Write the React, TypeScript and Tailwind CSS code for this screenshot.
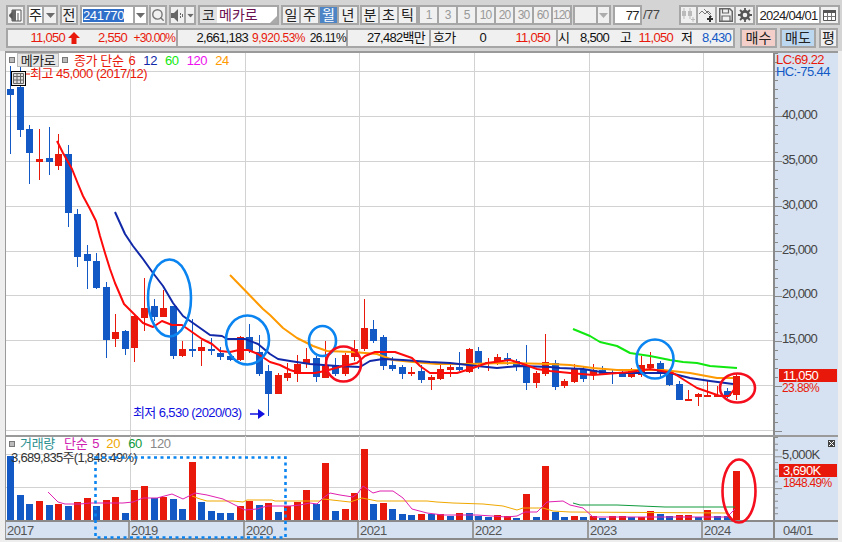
import { Search } from "lucide-react";

type Candle = [number, number, number, number, "r" | "b"];

const RED = "#e8190a";
const BLUE = "#1259c6";
const xAt = (i: number) => Math.round(10.3 + i * 9.55);

// high, body top, body bottom, low (all in page pixels)
const candles: Candle[] = [
  [65, 88, 94, 153, "b"], [66, 86, 129, 136, "b"], [124, 128, 152, 183, "b"], [128, 158, 161, 179, "r"],
  [126, 157, 161, 174, "b"], [133, 153, 165, 169, "r"], [144, 153, 212, 226, "b"], [208, 213, 256, 266, "b"],
  [244, 253, 260, 288, "b"], [252, 260, 287, 288, "b"], [281, 286, 339, 357, "b"], [313, 331, 338, 346, "r"],
  [329, 330, 348, 354, "b"], [314, 315, 347, 361, "r"], [277, 307, 317, 330, "r"], [298, 305, 316, 320, "b"],
  [289, 307, 316, 316, "r"], [305, 305, 355, 358, "b"], [340, 348, 355, 356, "r"], [318, 348, 349, 356, "b"],
  [339, 346, 350, 365, "r"], [337, 348, 350, 354, "b"], [346, 352, 356, 359, "b"], [350, 355, 359, 360, "b"],
  [335, 336, 359, 360, "r"], [323, 336, 350, 352, "b"], [334, 351, 373, 375, "b"], [364, 370, 393, 415, "b"],
  [372, 374, 393, 393, "r"], [362, 372, 377, 380, "r"], [354, 363, 373, 381, "r"], [347, 358, 362, 367, "r"],
  [355, 357, 376, 381, "b"], [340, 365, 377, 377, "r"], [357, 364, 373, 375, "b"], [352, 354, 373, 375, "r"],
  [339, 348, 356, 360, "r"], [298, 327, 348, 350, "r"], [319, 328, 340, 342, "b"], [334, 336, 365, 369, "b"],
  [356, 364, 368, 370, "b"], [364, 366, 373, 378, "b"], [366, 371, 373, 375, "r"], [364, 370, 379, 382, "b"],
  [374, 376, 379, 389, "r"], [362, 368, 378, 379, "r"], [364, 366, 369, 376, "r"], [351, 366, 369, 370, "b"],
  [347, 348, 371, 372, "r"], [346, 350, 363, 368, "b"], [357, 361, 363, 370, "r"], [353, 356, 362, 364, "r"],
  [352, 357, 360, 364, "b"], [358, 360, 366, 370, "b"], [344, 365, 382, 389, "b"], [370, 372, 382, 387, "r"],
  [333, 361, 373, 375, "r"], [359, 362, 386, 389, "b"], [378, 380, 385, 387, "r"], [363, 368, 381, 382, "r"],
  [365, 368, 378, 381, "b"], [363, 369, 374, 379, "r"], [365, 369, 373, 374, "b"], [368, 371, 372, 383, "b"],
  [369, 373, 376, 376, "b"], [367, 369, 376, 377, "r"], [355, 364, 374, 376, "r"], [351, 363, 367, 370, "r"],
  [360, 362, 373, 376, "b"], [371, 373, 384, 385, "b"], [380, 383, 399, 399, "b"], [389, 398, 400, 400, "r"],
  [392, 393, 396, 405, "r"], [379, 394, 395, 396, "r"], [385, 394, 395, 396, "r"], [387, 390, 395, 397, "b"],
  [372, 375, 394, 399, "r"],
];

const volumes: [number, "r" | "b"][] = [
  [456, "b"], [495, "b"], [504, "b"], [501, "r"], [505, "b"], [504, "r"], [506, "b"], [502, "r"], [498, "r"], [506, "b"],
  [500, "r"], [497, "r"], [513, "b"], [490, "r"], [486, "r"], [498, "b"], [497, "r"], [499, "b"], [509, "b"], [462, "r"],
  [502, "b"], [511, "b"], [513, "b"], [513, "b"], [506, "r"], [501, "r"], [505, "b"], [503, "r"], [512, "b"], [506, "r"],
  [502, "r"], [490, "r"], [504, "b"], [463, "r"], [511, "b"], [509, "r"], [493, "r"], [449, "r"], [504, "b"], [503, "r"],
  [509, "b"], [514, "b"], [515, "b"], [514, "r"], [514, "b"], [514, "r"], [516, "b"], [513, "r"], [513, "b"], [516, "b"],
  [517, "b"], [515, "r"], [516, "r"], [518, "b"], [494, "r"], [517, "b"], [466, "r"], [512, "b"], [517, "b"], [516, "r"],
  [517, "b"], [516, "r"], [518, "b"], [516, "r"], [516, "r"], [517, "b"], [517, "r"], [511, "r"], [514, "b"], [516, "b"],
  [515, "r"], [515, "r"], [517, "b"], [510, "r"], [516, "b"], [516, "b"], [471, "r"],
];

const maRed =
  "57,140 63,152 72,168 78,183 83,195 90,208 96,220 100,235 105,252 110,268 115,282 124,303 133,312 143,322 153,326 162,320 172,324 182,324 192,331 202,338 212,343 220,350 230,351 239,349 248,349 258,353 270,361 280,364 290,369 300,372 315,372 325,370 343,365 357,362 365,355 375,351 395,351 412,357 420,365 430,372 457,372 470,368 487,362 510,359 523,363 537,368 550,370 570,372 593,374 630,371 650,368 673,372 697,387 720,395 729,395 736,386";
const maNavy =
  "115,211 120,222 125,233 133,245 143,258 153,272 163,285 173,302 183,315 193,322 210,334 222,335 227,338 245,338 258,343 270,353 278,358 290,360 310,363 337,365 360,366 370,360 383,358 403,359 430,361 450,362 477,365 497,367 520,365 550,366 560,367 583,368 607,372 630,372 670,372 690,377 710,380 733,383";
const maOrange =
  "230,274 263,308 270,314 283,327 297,337 313,345 327,350 353,351 377,353 393,359 413,361 437,363 470,363 503,362 550,363 570,364 593,367 617,369 663,369 690,372 717,377 733,377";
const maGreen =
  "573,328 590,335 600,341 617,345 630,352 650,355 670,359 683,361 697,362 710,365 737,367";
const volMagenta =
  "48,492 58,502 65,504 80,504 90,503 110,503 123,503 133,502 143,498 157,498 172,494 183,499 195,493 207,495 223,499 237,506 245,510 257,509 267,506 290,506 300,505 310,503 317,504 323,498 330,493 340,495 353,497 358,493 363,486 373,493 380,491 393,491 403,498 412,509 427,513 443,515 477,515 507,517 517,516 525,512 537,512 547,502 563,501 570,505 583,508 593,517 607,517 727,517 735,509";
const volYellow =
  "192,496 200,499 207,501 233,501 243,502 247,500 272,500 275,501 320,501 323,499 350,502 362,498 377,501 427,501 437,502 453,503 483,504 503,506 517,510 523,508 543,508 553,511 570,512 727,513";
const volGreen = "573,503 580,505 617,505 665,507 713,507 735,507";

const gridX = [130, 245, 359, 474, 589, 703];
const priceGrid = [70, 115, 160, 205, 250, 294, 339, 384, 429];
const priceLabels = [
  ["40,000", 115], ["35,000", 160], ["30,000", 205], ["25,000", 250], ["20,000", 294], ["15,000", 339],
] as const;
const years = [
  ["2017", 124], ["2019", 115], ["2020", 114], ["2021", 115], ["2022", 115], ["2023", 114], ["2024", 70],
] as const;

function Arrow() {
  return (
    <svg width="9" height="5" viewBox="0 0 9 5">
      <path d="M0 0h9L4.5 5z" fill="#6b6b6b" />
    </svg>
  );
}

function Btn({ className = "", bg = "bg-[#f0f0f0]", children }: { className?: string; bg?: string; children?: React.ReactNode }) {
  return (
    <div className={`flex h-[20px] shrink-0 items-center justify-center border-2 border-[#a6a6a6] leading-none ${bg} ${className}`}>
      {children}
    </div>
  );
}

function Square() {
  return <span className="block h-[6px] w-[6px] border border-[#777] bg-[#bbb]" />;
}

function MainChart() {
  return (
    <svg className="block h-[382px] w-[767px]" viewBox="6 52 767 382">
      <g stroke="#d2d2d2" strokeWidth="1" shapeRendering="crispEdges">
        {gridX.map((x) => <line key={x} x1={x} x2={x} y1={52} y2={434} />)}
        {priceGrid.map((y) => <line key={y} x1={6} x2={773} y1={y} y2={y} />)}
      </g>
      <g shapeRendering="crispEdges">
        {candles.map(([hi, top, bot, lo, c], i) => (
          <g key={i} fill={c === "r" ? RED : BLUE}>
            <rect x={xAt(i)} y={hi} width={1} height={lo - hi} />
            <rect x={xAt(i) - 3} y={top} width={7} height={Math.max(bot - top, 2)} />
          </g>
        ))}
      </g>
      <g fill="none" strokeWidth="2" strokeLinejoin="round">
        <polyline points={maOrange} stroke="#ff9a00" />
        <polyline points={maNavy} stroke="#1129a8" />
        <polyline points={maRed} stroke="#ff0a0a" />
        <polyline points={maGreen} stroke="#10e810" />
      </g>
      <path d="M20 73h10" stroke={RED} />
      <path d="M250 413h11" stroke="#1010e0" strokeWidth="1.5" />
      <path d="M258 408l7 5-7 5z" fill="#1010e0" />
    </svg>
  );
}

function VolumeChart() {
  return (
    <svg className="block h-[85px] w-[767px]" viewBox="6 436 767 85">
      <g stroke="#d2d2d2" strokeWidth="1" shapeRendering="crispEdges">
        {gridX.map((x) => <line key={x} x1={x} x2={x} y1={436} y2={521} />)}
        {[454, 487].map((y) => <line key={y} x1={6} x2={773} y1={y} y2={y} />)}
      </g>
      <g shapeRendering="crispEdges">
        {volumes.map(([top, c], i) => (
          <rect key={i} x={xAt(i) - 3} y={top} width={7} height={520 - top} fill={c === "r" ? RED : BLUE} />
        ))}
      </g>
      <g fill="none" strokeWidth="1">
        <polyline points={volGreen} stroke="#0f9a3c" />
        <polyline points={volYellow} stroke="#f0a800" />
        <polyline points={volMagenta} stroke="#e020b0" />
      </g>
    </svg>
  );
}

function AxisTicks({ from, to, step, major }: { from: number; to: number; step: number; major: number }) {
  const ticks: number[] = [];
  for (let y = from; y < to; y += step) ticks.push(Math.round(y));
  return (
    <svg className="absolute left-0 top-0 h-full w-[10px]" viewBox={`0 ${from} 10 ${to - from}`} preserveAspectRatio="none">
      {ticks.map((y, i) => (
        <rect key={i} x={0} y={y} height={1} width={i % 5 === major ? 7 : 3} fill="#8a8a8a" />
      ))}
    </svg>
  );
}

export default function App() {
  return (
    <div className="relative h-[542px] w-[842px] overflow-hidden bg-[#d4d4d4] font-['Liberation_Sans','Noto_Sans_CJK_KR',sans-serif] text-[14px] text-[#222]">
      {/* top toolbar */}
      <div className="flex h-[25px] items-end pl-[6px]">
        <Btn className="w-[19px]">
          <svg width="13" height="13" viewBox="0 0 13 13">
            <path d="M3 1h9v11H3z" fill="#fff" stroke="#555" />
            <path d="M3 1h4v11H3z" fill="#666" />
            <path d="M9 4v8M0 6.5l3-3v6z" stroke="#555" fill="#555" />
          </svg>
        </Btn>
        <Btn bg="bg-white" className="ml-[2px] w-[17px]">주</Btn>
        <Btn className="w-[14px] border-l-0"><Arrow /></Btn>
        <Btn className="ml-[2px] w-[18px]">전</Btn>
        <Btn bg="bg-white" className="ml-[2px] w-[55px] justify-start pl-[1px]">
          <span className="bg-[#2f6fc9] text-[13px] leading-[13px] tracking-[-0.4px] text-white">241770</span>
        </Btn>
        <Btn bg="bg-white" className="w-[13px] border-l-0"><Arrow /></Btn>
        <Btn className="ml-[1px] w-[18px]"><Search size={14} color="#777" strokeWidth={2.4} /></Btn>
        <Btn className="ml-[2px] w-[17px]">
          <svg width="13" height="13" viewBox="0 0 13 13">
            <path d="M0 4h3l4-4v13l-4-4H0z" fill="#666" />
            <path d="M9 4h1v2H9zM9 7h1v2H9zM11 5h1v3h-1z" fill="#666" />
          </svg>
        </Btn>
        <Btn className="w-[10px] border-l-0"><span className="scale-75"><Arrow /></span></Btn>
        <Btn bg="bg-white" className="relative ml-[2px] w-[81px] justify-start">
          <span className="flex h-[16px] w-[17px] items-center justify-center bg-[#e2e2e2]">코</span>
          <span className="ml-[2px] text-[#6b1050]">메카로</span>
          <span className="absolute bottom-0 right-0 h-0 w-0 border-b-[7px] border-l-[7px] border-b-[#aaa] border-l-transparent" />
        </Btn>
        <div className="ml-[2px] flex">
          <Btn className="w-[20px]">일</Btn>
          <Btn className="w-[19px] border-l-0">주</Btn>
          <Btn bg="bg-[#4c84c6]" className="w-[19px] border-l-0 text-white">월</Btn>
          <Btn className="w-[20px] border-l-0">년</Btn>
        </div>
        <div className="ml-[1px] flex">
          <Btn className="w-[20px]">분</Btn>
          <Btn className="w-[19px] border-l-0">초</Btn>
          <Btn className="w-[19px] border-l-0">틱</Btn>
        </div>
        <div className="flex">
          {["1", "3", "5", "10", "20", "30", "60", "120"].map((n, i) => (
            <Btn key={n} className={`${i === 0 ? "w-[21px]" : "w-[19px] border-l-0"} text-[12px] tracking-[-1px] text-[#999]`}>{n}</Btn>
          ))}
        </div>
        <Btn className="ml-[1px] w-[25px]" />
        <Btn className="w-[13px] border-l-0"><span className="opacity-50"><Arrow /></span></Btn>
        <Btn bg="bg-white" className="ml-[2px] w-[29px] justify-end pr-[1px] text-[13px] tracking-[-0.6px]">77</Btn>
        <span className="h-[20px] w-[37px] shrink-0 pl-[1px] text-[13px] leading-[20px] tracking-[-0.6px] text-[#444]">/77</span>
        <Btn className="w-[19px]">
          <svg width="15" height="14" viewBox="0 0 15 14">
            <path d="M3 0v11M9 0v11" stroke="#bbb" />
            <path d="M1 3h4v5H1zM7 3h4v5H7zM10 11h4v1h-4zM11.5 9h1v5h-1z" fill="#bbb" />
          </svg>
        </Btn>
        <Btn className="w-[19px] border-l-0">
          <svg width="15" height="15" viewBox="0 0 15 15">
            <path d="M0 6l3-3 3 3 3-3 3 3M5 1l8 8" stroke="#777" fill="none" />
            <path d="M10 8h2v2h2v2h-2v2h-2v-2H8v-2h2z" fill="#333" />
          </svg>
        </Btn>
        <Btn className="w-[19px] border-l-0">
          <svg width="14" height="14" viewBox="0 0 14 14">
            <path d="M.75.75h10l2.5 2.5v10H.75z" fill="none" stroke="#666" strokeWidth="1.5" />
            <path d="M3.5 1v4h6V1M3 13V8h8v5" fill="none" stroke="#666" strokeWidth="1.2" />
          </svg>
        </Btn>
        <Btn className="w-[19px] border-l-0">
          <svg width="14" height="14" viewBox="0 0 14 14">
            <circle cx="7" cy="7" r="3.6" fill="none" stroke="#555" strokeWidth="2.6" />
            <path d="M7 0v3M7 11v3M0 7h3M11 7h3M2 2l2 2M10 10l2 2M12 2l-2 2M4 10l-2 2" stroke="#555" strokeWidth="1.8" />
          </svg>
        </Btn>
        <Btn bg="bg-white" className="ml-[1px] w-[65px] text-[13px] tracking-[-0.7px]">2024/04/01</Btn>
        <Btn className="w-[19px] border-l-0">
          <svg width="13" height="12" viewBox="0 0 13 12">
            <path d="M.5 1.5h12v10H.5z" fill="#fff" stroke="#555" />
            <path d="M.5 1.5h12v2H.5z" fill="#555" stroke="#555" />
            <path d="M4.5 4v7M8.5 4v7M1 7.5h11" stroke="#777" />
          </svg>
        </Btn>
      </div>

      {/* quote bar */}
      <div className="mt-[3px] flex h-[20px] items-center pl-[6px] leading-none whitespace-nowrap">
        <div className="flex h-full w-[729px] border-2 border-[#a6a6a6] bg-[#f0f0f0] text-[13px] leading-[16px] tracking-[-0.7px]">
          <div className="flex w-[170px] shrink-0 border-r-2 border-[#a6a6a6] text-[#e8190a]">
            <span className="w-[57px] text-right">11,050</span>
            <svg className="ml-[3px] mt-[2px]" width="12" height="12" viewBox="0 0 12 12">
              <path d="M6 0l6 6H8.5v6h-5V6H0z" fill="#e8190a" />
            </svg>
            <span className="w-[47px] text-right">2,550</span>
            <span className="w-[48px] text-right text-[12px] tracking-[-0.9px]">+30.00%</span>
          </div>
          <div className="flex w-[170px] shrink-0 border-r-2 border-[#a6a6a6] text-[#111]">
            <span className="w-[70px] text-right">2,661,183</span>
            <span className="w-[57px] text-right text-[12px] tracking-[-0.5px] text-[#e8190a]">9,920.53%</span>
            <span className="w-[41px] text-right text-[12px] tracking-[-0.6px]">26.11%</span>
          </div>
          <div className="w-[83px] shrink-0 border-r-2 border-[#a6a6a6] pl-[19px] text-[#111]">27,482백만</div>
          <div className="flex w-[127px] shrink-0 border-r-2 border-[#a6a6a6] text-[#111]">
            <span className="ml-[2px] w-[24px]">호가</span>
            <span className="w-[29px] text-right">0</span>
            <span className="w-[64px] text-right text-[#e8190a]">11,050</span>
          </div>
          <div className="flex text-[#111]">
            <span className="w-[9px]">시</span>
            <span className="w-[42px] text-right">8,500</span>
            <span className="ml-[11px] w-[9px]">고</span>
            <span className="w-[44px] text-right text-[#e8190a]">11,050</span>
            <span className="ml-[8px] w-[9px]">저</span>
            <span className="w-[41px] text-right text-[#1259c6]">8,430</span>
          </div>
        </div>
        <Btn bg="bg-[#f4cfc9]" className="ml-[5px] w-[37px]">매수</Btn>
        <Btn bg="bg-[#bcd8f0]" className="ml-[3px] w-[36px]">매도</Btn>
        <Btn className="ml-[3px] w-[19px]">평</Btn>
      </div>

      {/* chart panel */}
      <div className="absolute inset-x-0 bottom-0 top-[51px] bg-[#eeeeee] pl-[5px]">
        <div className="h-[489px] w-[833px] border-l-[1px] border-t-2 border-[#9a9a9a] bg-white">
          {/* price pane */}
          <div className="flex h-[382px]">
            <div className="relative w-[767px]">
              <MainChart />
              <div className="absolute left-[3px] top-0 flex h-[14px] items-center whitespace-nowrap text-[13px] leading-none tracking-[-0.4px]">
                <Square />
                <span className="ml-[2px] flex h-[14px] w-[42px] items-center justify-center border border-[#bbb] bg-[#e6e6e6] text-[#222]">메카로</span>
                <span className="ml-[3px]"><Square /></span>
                <span className="ml-[6px] text-[#e8190a]">종가 단순</span>
                <span className="ml-[5px] text-[#e8190a]">6</span>
                <span className="ml-[8px] text-[#1129a8]">12</span>
                <span className="ml-[8px] text-[#10e810]">60</span>
                <span className="ml-[8px] text-[#ee10ee]">120</span>
                <span className="ml-[8px] text-[#ff9a00]">24</span>
              </div>
              <div className="absolute left-[24px] top-[14px] whitespace-nowrap text-[13px] leading-[13px] tracking-[-0.5px] text-[#e8190a]">최고 45,000 (2017/12)</div>
              <div className="absolute left-[5px] top-[18px] flex h-[15px] w-[15px] items-center justify-center border border-black bg-[#eeeeee]">
                <svg width="11" height="11" viewBox="0 0 11 11">
                  <path d="M.5.5h10v10H.5zM.5 3.5h10M.5 7h10M4 .5v10M7.5.5v10" fill="#ddd" stroke="#666" />
                </svg>
              </div>
              <div className="absolute left-[127px] top-[352px] whitespace-nowrap text-[13px] leading-[15px] tracking-[-0.6px] text-[#1010e0]">최저 6,530 (2020/03)</div>
            </div>
            <div className="relative flex-1 border-l-2 border-[#8a8a8a] bg-[#d6e2f1] text-[13px] leading-[12px] tracking-[-0.6px] whitespace-nowrap">
              <AxisTicks from={52} to={434} step={9} major={2} />
              <div className="absolute left-[1px] top-[1px] text-[#e8190a]">LC:69.22</div>
              <div className="absolute left-[1px] top-[13px] text-[#1259c6]">HC:-75.44</div>
              {priceLabels.map(([t, y]) => (
                <div key={t} className="absolute left-[7px] leading-[14px] tracking-[-0.8px] text-[#444]" style={{ top: y - 60 }}>{t}</div>
              ))}
              <div className="absolute left-[4px] right-[1px] top-[316px] h-[13px] bg-[#e8190a] pl-[4px] leading-[13px] text-white">11,050</div>
              <div className="absolute left-[7px] top-[329px] text-[12px] leading-[12px] tracking-[-0.6px] text-[#e8190a]">23.88%</div>
            </div>
          </div>

          {/* volume pane */}
          <div className="flex h-[85px] border-t-2 border-[#9a9a9a]">
            <div className="relative -mt-[1px] h-[85px] w-[767px]">
              <VolumeChart />
              <div className="absolute left-[3px] top-0 flex h-[15px] items-center whitespace-nowrap text-[13px] leading-none tracking-[-0.3px]">
                <Square />
                <span className="ml-[5px] text-[#2a9090]">거래량</span>
                <span className="ml-[9px] text-[#d020b0]">단순</span>
                <span className="ml-[5px] text-[#d020b0]">5</span>
                <span className="ml-[7px] text-[#f0a800]">20</span>
                <span className="ml-[8px] text-[#0f9a3c]">60</span>
                <span className="ml-[8px] text-[#888]">120</span>
              </div>
              <div className="absolute left-[5px] top-[15px] whitespace-nowrap text-[13px] leading-[14px] tracking-[-0.7px] text-[#333]">3,689,835주(1,848.49%)</div>
            </div>
            <div className="relative flex-1 border-l-2 border-[#8a8a8a] bg-[#d6e2f1] text-[13px] leading-[14px] tracking-[-0.6px] whitespace-nowrap">
              <AxisTicks from={434} to={520} step={6.6} major={3} />
              <div className="absolute right-[3px] top-[3px] flex h-[7px] w-[7px] items-center justify-center bg-[#444]">
                <svg width="5" height="5" viewBox="0 0 5 5"><path d="M0 0l5 5M5 0L0 5" stroke="#fff" /></svg>
              </div>
              <div className="absolute left-[7px] top-[11px] text-[#444]">5,000K</div>
              <div className="absolute left-[4px] right-[1px] top-[27px] h-[13px] bg-[#e8190a] pl-[4px] leading-[13px] text-white">3,690K</div>
              <div className="absolute left-[8px] top-[40px] text-[12px] leading-[12px] tracking-[-0.7px] text-[#e8190a]">1848.49%</div>
            </div>
          </div>

          {/* time axis */}
          <div className="flex h-[20px] border-y-2 border-[#8a8a8a] bg-[#d6e2f1] text-[13px] leading-[17px] tracking-[-0.6px] text-[#555]">
            <div className="flex w-[767px]">
              {years.map(([t, w], i) => (
                <span key={t} className={`pl-[1px] ${i < 6 ? "border-r-2 border-[#9a9a9a]" : ""}`} style={{ width: w }}>{t}</span>
              ))}
            </div>
            <span className="flex-1 border-l-2 border-[#8a8a8a] pl-[8px]">04/01</span>
          </div>
        </div>
      </div>

      {/* hand drawn marks */}
      <svg className="pointer-events-none absolute inset-0 h-[542px] w-[842px]" viewBox="0 0 842 542" fill="none">
        <g stroke="#0a84f0" strokeWidth="2.6">
          <ellipse cx="169.5" cy="298" rx="21.5" ry="38.5" />
          <ellipse cx="247.5" cy="340" rx="21.5" ry="24.5" />
          <ellipse cx="322.5" cy="341" rx="13.5" ry="15" />
          <ellipse cx="655" cy="359" rx="18.5" ry="19.5" />
          <rect x="95.5" y="457.5" width="190" height="80" strokeDasharray="3 3.5" />
        </g>
        <g stroke="#f50f1e" strokeWidth="2.6">
          <ellipse cx="343.5" cy="364" rx="17.5" ry="17.5" />
          <ellipse cx="737.5" cy="388" rx="17.5" ry="14.5" />
          <ellipse cx="739" cy="491" rx="16.5" ry="31.5" />
        </g>
      </svg>
    </div>
  );
}
